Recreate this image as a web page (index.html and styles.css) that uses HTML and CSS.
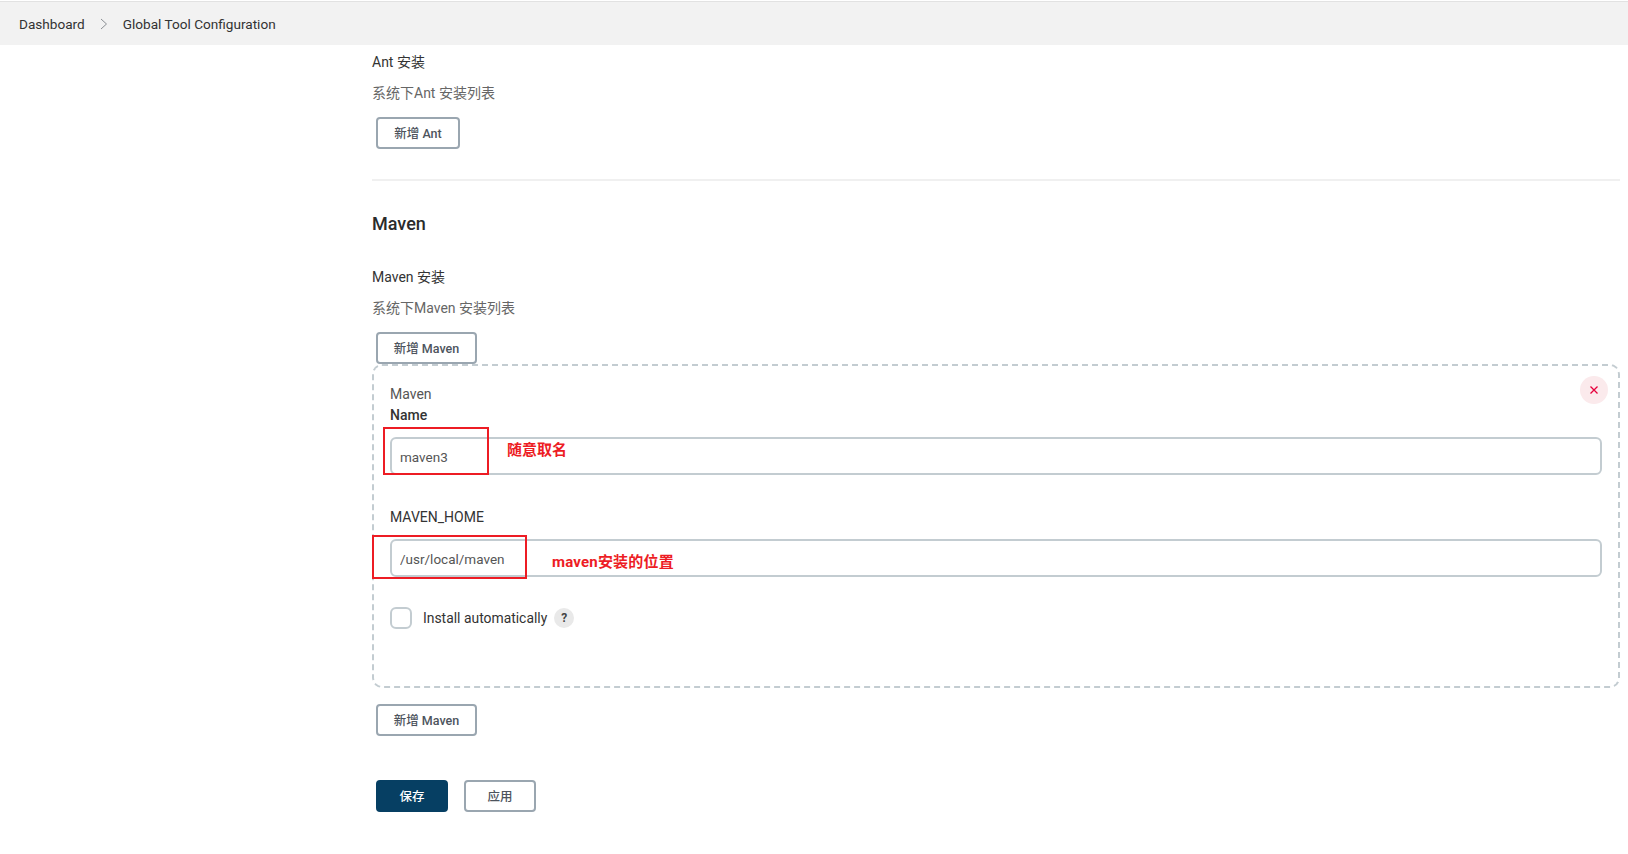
FILE: index.html
```html
<!DOCTYPE html>
<html lang="zh-CN">
<head>
    <meta charset="UTF-8">
    <title>Global Tool Configuration</title>
    <link rel="stylesheet" href="styles.css">
</head>
<body>
<div class="breadcrumb-bar">
    <a class="crumb">Dashboard</a>
    <svg class="crumb-sep" width="8" height="12" viewBox="0 0 8 12"><path d="M1 1l5.500 5-5.500 5" fill="none" stroke="#8b8f94" stroke-width="1"/></svg>
    <a class="crumb">Global Tool Configuration</a>
</div>
<div class="main-panel">
    <div class="field-title ant-title">Ant 安装</div>
    <div class="field-desc">系统下Ant 安装列表</div>
    <button class="btn btn-ant">新增 Ant</button>
    <div class="section-line"></div>

    <h2 class="section-title">Maven</h2>
    <div class="field-title">Maven 安装</div>
    <div class="field-desc">系统下Maven 安装列表</div>
    <button class="btn btn-maven">新增 Maven</button>

    <div class="repeat-box">
        <span class="delete-btn">
            <svg width="10" height="10" viewBox="0 0 10 10"><path d="M1.500 1.500l7 7M8.500 1.500l-7 7" stroke="#e6003c" stroke-width="1.300"/></svg>
        </span>
        <div class="repeat-name">Maven</div>
        <label class="input-label label-name">Name</label>
        <input class="text-input" type="text" value="maven3">
        <label class="input-label label-home">MAVEN_HOME</label>
        <input class="text-input" type="text" value="/usr/local/maven">
        <div class="check-row">
            <span class="check-box"></span>
            <span class="check-label">Install automatically</span>
            <span class="help-btn">?</span>
        </div>
        <!-- 截图上的红色标注 -->
        <div class="mark mark-name"></div>
        <div class="mark-text mark-text-name">随意取名</div>
        <div class="mark mark-home"></div>
        <div class="mark-text mark-text-home">maven安装的位置</div>
    </div>

    <button class="btn btn-maven btn-add">新增 Maven</button>
    <div class="bottom-btns">
        <button class="btn btn-save">保存</button>
        <button class="btn btn-apply">应用</button>
    </div>
</div>
</body>
</html>
```
FILE: styles.css
```css
* {
    box-sizing: border-box;
}
html, body {
    margin: 0;
    padding: 0;
    background: #fff;
}
body {
    height: 854px;
    overflow: hidden;
    padding-top: 1px;
    font-family: Roboto, "Noto Sans CJK SC", sans-serif;
    font-size: 14px;
    color: #333;
}
.breadcrumb-bar {
    display: flex;
    align-items: center;
    height: 44px;
    padding-left: 19px;
    background: #f2f2f2;
    border-top: 1px solid #e2e2e2;
}
.crumb {
    font-size: 13.600px;
    color: #333;
}
.crumb-sep {
    margin: 0 15px 0 15px;
}
.main-panel {
    margin: 0 8px 0 372px;
}
.field-title {
    line-height: 20px;
}
.ant-title {
    margin-top: 7px;
}
.field-desc {
    margin-top: 11px;
    line-height: 20px;
    color: #666;
}
.btn {
    display: block;
    height: 32px;
    padding: 0 0 2px;
    margin-left: 4px;
    background: #fff;
    border: 2px solid #9aa6b0;
    border-radius: 4px;
    font-family: inherit;
    font-size: 12.500px;
    font-weight: 500;
    color: #4d545d;
}
.btn-ant {
    width: 84px;
    margin-top: 14px;
}
.btn-maven {
    width: 101px;
    margin-top: 14px;
}
.section-line {
    height: 2px;
    margin-top: 30px;
    background: #f0f0f0;
}
.section-title {
    margin: 30px 0 0;
    font-size: 18px;
    font-weight: 500;
    line-height: 26px;
    color: #2b2b2b;
}
.section-title + .field-title {
    margin-top: 30px;
}
.repeat-box {
    position: relative;
    height: 324px;
    padding: 18px 16px 0 16px;
    border: 2px dashed #c3ccd1;
    border-radius: 10px;
    margin-top: 0;
}
.delete-btn {
    position: absolute;
    top: 10px;
    right: 10px;
    display: flex;
    align-items: center;
    justify-content: center;
    width: 28px;
    height: 28px;
    border-radius: 50%;
    background: #fbeaec;
}
.repeat-name {
    line-height: 20px;
    color: #555;
}
.input-label {
    display: block;
    line-height: 20px;
    color: #333;
}
.label-name {
    margin-top: 1px;
    font-weight: 500;
}
.label-home {
    margin-top: 32px;
}
.text-input {
    display: block;
    width: 100%;
    height: 38px;
    margin-top: 12px;
    padding: 2px 8px 0;
    border: 2px solid #c3ccd1;
    border-radius: 6px;
    background: #fff;
    font-family: inherit;
    font-size: 13.500px;
    color: #555;
}
.check-row {
    display: flex;
    align-items: center;
    margin-top: 30px;
}
.check-box {
    width: 22px;
    height: 22px;
    border: 2px solid #c3ccd1;
    border-radius: 6px;
}
.check-label {
    margin-left: 11px;
    font-size: 13.900px;
}
.help-btn {
    display: flex;
    align-items: center;
    justify-content: center;
    width: 20px;
    height: 20px;
    margin-left: 7px;
    border-radius: 50%;
    background: #e9e9e9;
    font-size: 12px;
    font-weight: 700;
    color: #444;
}
.mark {
    position: absolute;
    border: 2px solid #ed1c24;
}
.mark-name {
    top: 61px;
    left: 9px;
    width: 106px;
    height: 48px;
}
.mark-home {
    top: 169px;
    left: -2px;
    width: 155px;
    height: 44px;
}
.mark-text {
    position: absolute;
    font-size: 15px;
    font-weight: 700;
    line-height: 20px;
    color: #ed1c24;
}
.mark-text-name {
    top: 74px;
    left: 133px;
}
.mark-text-home {
    top: 186px;
    left: 178px;
    letter-spacing: 0.200px;
}
.btn-add {
    margin-top: 16px;
}
.bottom-btns {
    display: flex;
    gap: 16px;
    margin-top: 44px;
}
.bottom-btns .btn {
    width: 72px;
}
.btn-save {
    background: #063f63;
    border-color: #063f63;
    color: #fff;
}
.btn-apply {
    margin-left: 0;
}
```
